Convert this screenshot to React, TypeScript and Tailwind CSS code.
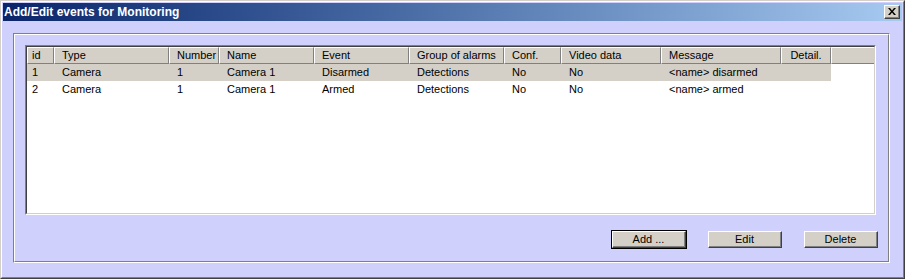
const columns = [
  { key: 'id', label: 'id', w: 'w-[27px]', first: true },
  { key: 'type', label: 'Type', w: 'w-[115px]' },
  { key: 'number', label: 'Number', w: 'w-[50px]' },
  { key: 'name', label: 'Name', w: 'w-[95px]' },
  { key: 'event', label: 'Event', w: 'w-[95px]' },
  { key: 'group', label: 'Group of alarms', w: 'w-[95px]' },
  { key: 'conf', label: 'Conf.', w: 'w-[57px]' },
  { key: 'video', label: 'Video data', w: 'w-[100px]' },
  { key: 'message', label: 'Message', w: 'w-[120px]' },
  { key: 'detail', label: 'Detail.', w: 'w-[50px]', center: true },
]

const rows: Record<string, string>[] = [
  {
    id: '1',
    type: 'Camera',
    number: '1',
    name: 'Camera 1',
    event: 'Disarmed',
    group: 'Detections',
    conf: 'No',
    video: 'No',
    message: '<name> disarmed',
    detail: '',
  },
  {
    id: '2',
    type: 'Camera',
    number: '1',
    name: 'Camera 1',
    event: 'Armed',
    group: 'Detections',
    conf: 'No',
    video: 'No',
    message: '<name> armed',
    detail: '',
  },
]

function Btn({ label, isDefault }: { label: string; isDefault?: boolean }) {
  return (
    <div className={isDefault ? 'border border-black' : 'border border-transparent'}>
      <div className="border-t border-l border-white border-r border-b border-r-[#404040] border-b-[#404040]">
        <div className="flex h-[15px] w-[72px] items-center justify-center border-r border-b border-[#808080] bg-[#d4d0c8] text-[11px] text-black">
          {label}
        </div>
      </div>
    </div>
  )
}

export default function App() {
  return (
    <div
      className="h-[279px] w-[905px] overflow-hidden bg-[#d0d0fd]"
      style={{ fontFamily: '"Liberation Sans", Arial, sans-serif' }}
    >
      <div className="h-full border-t border-l border-[#d4d0c8] border-r border-b border-r-[#404040] border-b-[#404040]">
        <div className="flex h-full flex-col border-t border-l border-white border-r border-b border-r-[#808080] border-b-[#808080] p-[1px]">
          {/* title bar */}
          <div className="flex h-[18px] shrink-0 items-center bg-gradient-to-r from-[#0a246a] to-[#a6caf0] pr-[2px] pl-[1px]">
            <span className="flex-1 text-[12px] font-bold text-white">Add/Edit events for Monitoring</span>
            <div className="border-t border-l border-white border-r border-b border-r-[#404040] border-b-[#404040]">
              <div className="flex h-[12px] w-[14px] items-center justify-center border-r border-b border-[#808080] bg-[#d4d0c8]">
                <svg width="8" height="7" viewBox="0 0 8 7">
                  <path d="M0 0h2l2 2.5L6 0h2L5 3.5 8 7H6L4 4.5 2 7H0l3-3.5z" fill="#000" />
                </svg>
              </div>
            </div>
          </div>

          {/* body */}
          <div className="flex-1 pt-[12px] pr-[12px] pb-[13px] pl-[10px]">
            <div className="h-full border-t border-l border-[#808080] border-r border-b border-r-white border-b-white">
              <div className="flex h-full flex-col border-t border-l border-white border-r border-b border-r-[#808080] border-b-[#808080] pt-[10px] pr-[9px] pb-[10px] pl-[10px]">
                {/* list */}
                <div className="h-[170px] w-[851px] border-t border-l border-[#808080] border-r border-b border-r-white border-b-white">
                  <div className="h-full overflow-hidden border-t border-l border-[#404040] border-r border-b border-r-[#d4d0c8] border-b-[#d4d0c8] bg-white">
                    <div className="flex h-[17px] text-[11px] text-black">
                      {columns.map((c) => (
                        <div
                          key={c.key}
                          className={`${c.w} flex shrink-0 items-center border-t border-l border-white border-r border-b border-r-[#808080] border-b-[#808080] bg-[#d4d0c8] ${c.center ? 'justify-center' : c.first ? 'pl-[4px]' : 'pl-[7px]'}`}
                        >
                          {c.label}
                        </div>
                      ))}
                      <div className="flex-1 border-t border-l border-white border-b border-b-[#808080] bg-[#d4d0c8]" />
                    </div>
                    {rows.map((r, i) => (
                      <div
                        key={r.id}
                        className={`flex h-[17px] w-[804px] text-[11px] text-black ${i === 0 ? 'bg-[#d4d0c8]' : ''}`}
                      >
                        {columns.map((c) => (
                          <div
                            key={c.key}
                            className={`${c.w} flex shrink-0 items-center whitespace-nowrap ${c.first ? 'pl-[5px]' : 'pl-[8px]'}`}
                          >
                            {r[c.key]}
                          </div>
                        ))}
                      </div>
                    ))}
                  </div>
                </div>

                {/* buttons */}
                <div className="mt-[15px] flex justify-end gap-[20px]">
                  <Btn label="Add ..." isDefault />
                  <Btn label="Edit" />
                  <Btn label="Delete" />
                </div>
              </div>
            </div>
          </div>
        </div>
      </div>
    </div>
  )
}
